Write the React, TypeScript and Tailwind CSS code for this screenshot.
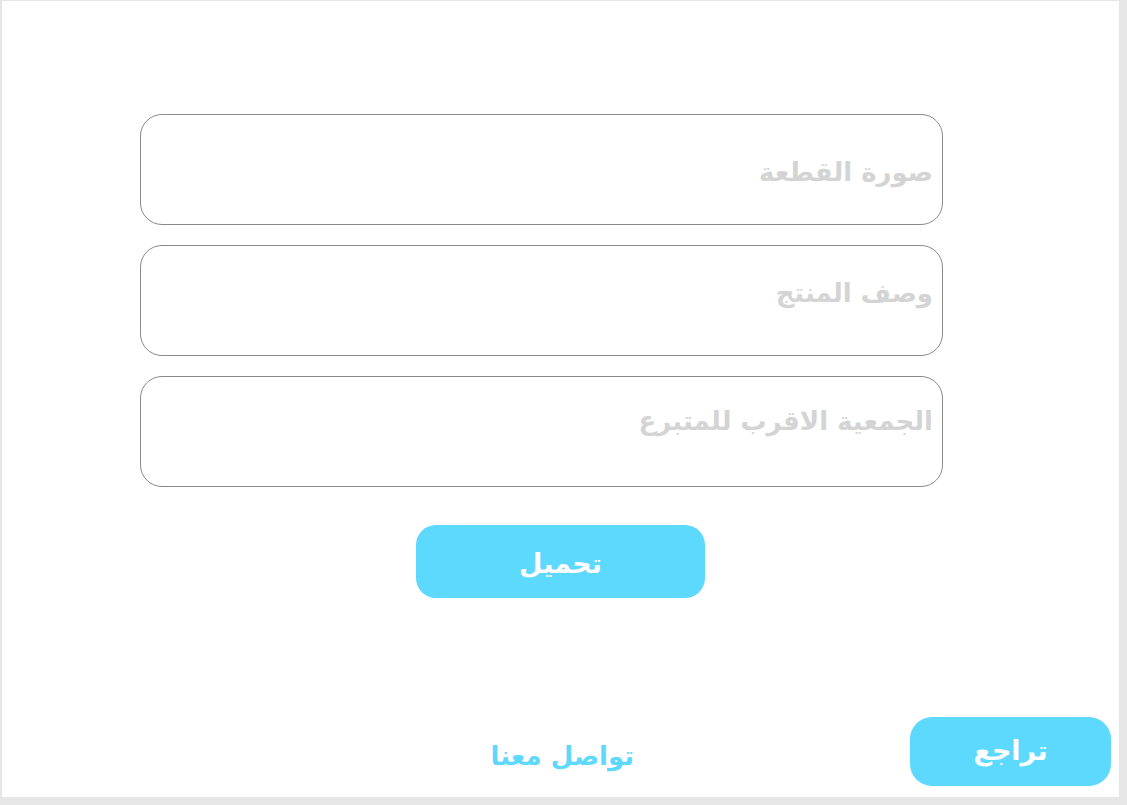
export default function App() {
    const fields = [
        {label: "صورة القطعة", pad: "pt-[44px]"},
        {label: "وصف المنتج", pad: "pt-[34px]"},
        {label: "الجمعية الاقرب للمتبرع", pad: "pt-[31px]"},
    ];

    return (
        <div className="w-[1127px] h-[805px] bg-[#e6e6e6] pt-px pl-[2px]" style={{fontFamily: '"DejaVu Sans", "Noto Sans", sans-serif'}}>
            <div dir="rtl" className="w-[1117px] h-[796px] bg-white flex flex-col">
                {/* حقول النموذج */}
                <div className="pt-[113px] pr-[176px] flex flex-col gap-[20px]">
                    {fields.map((f) => (
                        <div
                            key={f.label}
                            className={`w-[803px] h-[111px] rounded-[22px] border border-[#8a8a8a] pr-[9px] ${f.pad}`}
                        >
                            <span className="text-[26px] font-bold text-[#d4d4d4] leading-none">{f.label}</span>
                        </div>
                    ))}
                </div>

                <div className="flex justify-center mt-[38px]">
                    <button className="w-[289px] h-[73px] rounded-[20px] bg-[#5ed9fe] text-white text-[27px] font-bold pt-[5px]">
                        تحميل
                    </button>
                </div>

                {/* أسفل الصفحة */}
                <div className="mt-auto mb-[11px] flex items-center pr-[8px]">
                    <button className="w-[201px] h-[69px] rounded-[22px] bg-[#5ed9fe] text-white text-[27px] font-bold">
                        تراجع
                    </button>
                    <div className="mr-[276px] text-[26px] font-bold text-[#5ed9fe] mt-[10px]">تواصل معنا</div>
                </div>
            </div>
        </div>
    );
}
